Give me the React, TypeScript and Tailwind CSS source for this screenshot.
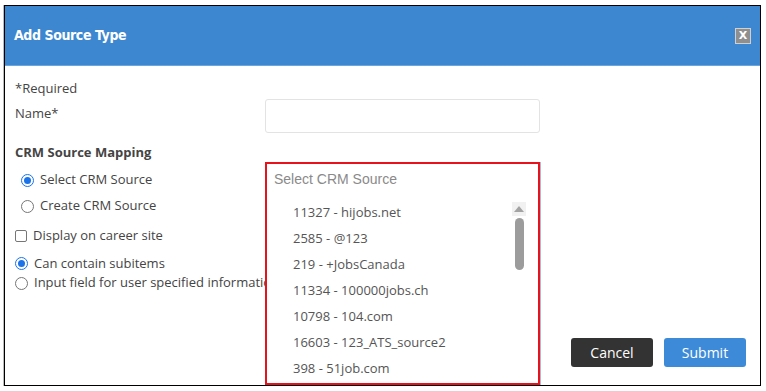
import React from "react";

const items = [
  "11327 - hijobs.net",
  "2585 - @123",
  "219 - +JobsCanada",
  "11334 - 100000jobs.ch",
  "10798 - 104.com",
  "16603 - 123_ATS_source2",
  "398 - 51job.com",
];

function Radio({ checked }: { checked?: boolean }) {
  return checked ? (
    <span className="w-[13px] h-[13px] rounded-full border-[1.5px] border-[#1a73e8] flex items-center justify-center shrink-0">
      <span className="w-[7px] h-[7px] rounded-full bg-[#1a73e8]" />
    </span>
  ) : (
    <span className="w-[13px] h-[13px] rounded-full border border-[#767676] shrink-0" />
  );
}

export default function App() {
  return (
    <div className="w-[766px] h-[391px] bg-white pt-[5px] pl-[4px]" style={{ fontFamily: '"Open Sans", sans-serif' }}>
      <div className="w-[757px] h-[381px] border border-black flex flex-col overflow-hidden shadow-[-1px_0_0_#bbb]">
        <div className="h-[60px] bg-[#3c87cf] border-b border-[#6aa5df] flex items-center justify-between pl-[9px] pr-[9px] shrink-0">
          <span className="text-white font-bold text-[14px] tracking-[-0.4px]" style={{ fontFamily: '"DejaVu Sans Condensed", "DejaVu Sans", sans-serif', fontStretch: "condensed" }}>
            Add Source Type
          </span>
          <span className="w-[16px] h-[16px] bg-[#8f8f8f] border border-[#d0d0d0] flex items-center justify-center text-white text-[11px] font-bold leading-none" style={{ fontFamily: '"DejaVu Sans", sans-serif' }}>
            X
          </span>
        </div>
        <div className="flex flex-1 text-[13px] text-[#444]">
          <div className="w-[250px] ml-[10px] pt-[13px] overflow-hidden whitespace-nowrap shrink-0">
            <div className="h-[20px] flex items-center">*Required</div>
            <div className="h-[20px] mt-[5px] flex items-center">Name*</div>
            <div className="h-[20px] mt-[19px] flex items-center font-bold">CRM Source Mapping</div>
            <div className="h-[20px] mt-[7px] flex items-center gap-[6px] pl-[6px]">
              <Radio checked />
              <span>Select CRM Source</span>
            </div>
            <div className="h-[20px] mt-[6px] flex items-center gap-[6px] pl-[6px]">
              <Radio />
              <span>Create CRM Source</span>
            </div>
            <div className="h-[20px] mt-[10px] flex items-center gap-[6px]">
              <span className="w-[12px] h-[12px] rounded-[2px] border border-[#767676] shrink-0" />
              <span>Display on career site</span>
            </div>
            <div className="h-[19px] mt-[8px] flex items-center gap-[6px]">
              <Radio checked />
              <span>Can contain subitems</span>
            </div>
            <div className="h-[20px] flex items-center gap-[6px]">
              <Radio />
              <span>Input field for user specified information</span>
            </div>
          </div>
          <div className="w-[275px] pt-[33px] shrink-0 flex flex-col">
            <div className="h-[34px] border border-[#e3e3e3] rounded-[3px] bg-white" />
            <div className="mt-[29px] flex-1 border-2 border-[#e8121c] bg-white shadow-[1px_0_0_#9fbde0] flex flex-col">
              <div className="h-[30px] flex items-center pl-[7px] pt-[1px] text-[14px] text-[#8a8a8a]" style={{ fontFamily: '"Liberation Sans", Arial, sans-serif' }}>
                Select CRM Source
              </div>
              <div className="flex">
                <div className="flex-1 pl-[26px] pt-[6px] text-[#555]">
                  {items.map((t) => (
                    <div key={t} className="h-[26px] flex items-center">{t}</div>
                  ))}
                </div>
                <div className="w-[14px] mr-[12px] flex flex-col items-center pt-[8px]">
                  <div className="w-[14px] h-[14px] bg-[#f1f1f1] flex items-center justify-center">
                    <svg width="10" height="6" viewBox="0 0 10 6"><path d="M0 6 L5 0 L10 6 Z" fill="#a3a3a3" /></svg>
                  </div>
                  <div className="w-[9px] h-[52px] rounded-full bg-[#9c9c9c] mt-[2px]" />
                </div>
              </div>
            </div>
          </div>
          <div className="flex-1 flex items-end justify-end gap-[11px] pr-[14px] pb-[18px]">
            <button className="w-[82px] h-[29px] rounded-[3px] bg-[#333] text-white text-[14px]">Cancel</button>
            <button className="w-[82px] h-[29px] rounded-[3px] bg-[#3d8bd8] text-white text-[14px]">Submit</button>
          </div>
        </div>
      </div>
    </div>
  );
}
